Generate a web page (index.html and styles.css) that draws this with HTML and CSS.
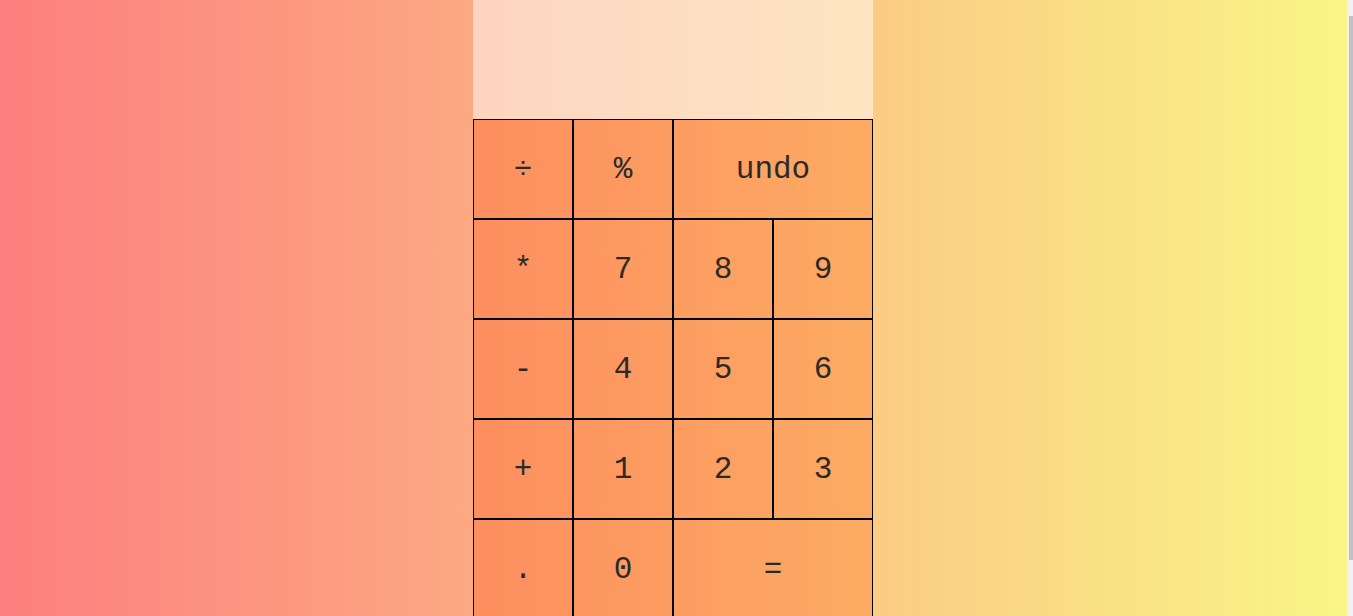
FILE: index.html
```html
<!DOCTYPE html>
<html lang="en">
<head>
<meta charset="utf-8">
<title>Calculator</title>
<link rel="stylesheet" href="styles.css">
</head>
<body>
<main class="page">
  <div class="calculator">
    <div class="display"></div>
    <div class="keys">
      <button class="key">÷</button>
      <button class="key">%</button>
      <button class="key wide">undo</button>
      <button class="key">*</button>
      <button class="key">7</button>
      <button class="key">8</button>
      <button class="key">9</button>
      <button class="key">-</button>
      <button class="key">4</button>
      <button class="key">5</button>
      <button class="key">6</button>
      <button class="key">+</button>
      <button class="key">1</button>
      <button class="key">2</button>
      <button class="key">3</button>
      <button class="key">.</button>
      <button class="key">0</button>
      <button class="key wide">=</button>
    </div>
  </div>
</main>
<div class="scrollbar"><div class="thumb"></div></div>
</body>
</html>
```
FILE: styles.css
```css
html {
  background: linear-gradient(to right, #fd7f7f, #f9f686);
  min-height: 100%;
}
body {
  margin: 0;
  font-family: "Liberation Mono", "Courier New", monospace;
}
.page {
  display: flex;
  justify-content: center;
  padding-right: 7px;
  padding-bottom: 42px;
}
.calculator {
  width: 400px;
  display: flex;
  flex-direction: column;
}
.display {
  height: 119px;
  background: rgba(255, 255, 255, 0.5);
}
.keys {
  display: grid;
  grid-template-columns: repeat(4, 100px);
  grid-auto-rows: 100px;
  background: linear-gradient(to right, #fd8e5f, #fcab63);
}
.key {
  box-sizing: border-box;
  border: 1px solid #000;
  background: transparent;
  margin: 0;
  padding: 0;
  font-family: "Liberation Mono", "Courier New", monospace;
  font-size: 31px;
  color: #2a2a2a;
  font-weight: 400;
}
.key.wide {
  grid-column: span 2;
}
.scrollbar {
  position: fixed;
  top: 0;
  right: 0;
  bottom: 0;
  width: 6px;
  background: #f1f1f1;
}
.thumb {
  margin: 16px 0 0 2px;
  height: 544px;
  background: #c1c1c1;
}
```
